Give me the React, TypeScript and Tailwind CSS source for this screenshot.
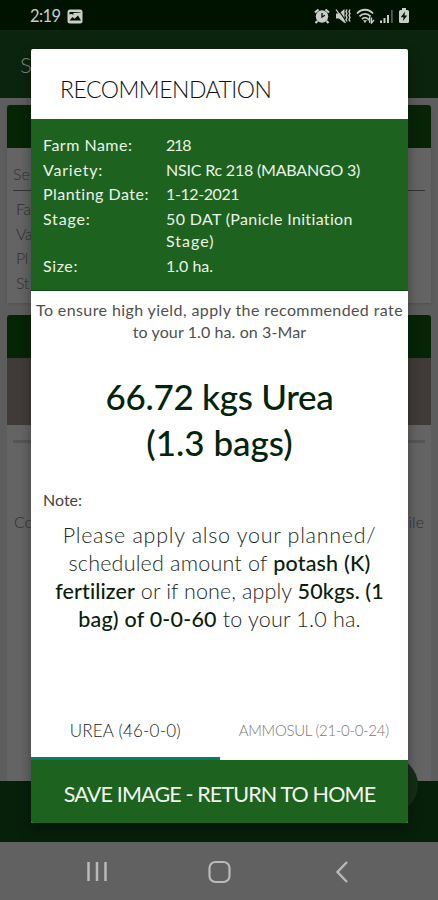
import { clsx } from "clsx"

const details = [
  { label: "Farm Name:", lines: ["218"], labelClass: "tracking-[0.5px]", valueClass: "tracking-[-1.2px]" },
  { label: "Variety:", lines: ["NSIC Rc 218 (MABANGO 3)"], labelClass: "tracking-[0.8px]", valueClass: "tracking-[-0.2px]" },
  { label: "Planting Date:", lines: ["1-12-2021"], labelClass: "tracking-[0.5px]", valueClass: "tracking-[-0.4px]" },
  { label: "Stage:", lines: ["50 DAT (Panicle Initiation", "Stage)"], labelClass: "tracking-[0.8px]", valueClass: "tracking-[0.35px]" },
  { label: "Size:", lines: ["1.0 ha."], labelClass: "tracking-[0.6px]", valueClass: "tracking-[0px]" },
]

function StatusBar() {
  return (
    <div className="flex h-[30px] items-center bg-[#001300] pt-[2px] pr-[29px] pl-[30px] text-[#c9cdc9]">
      <span className="w-[31px] text-[16.500px] leading-none tracking-[-0.6px] whitespace-nowrap">2:19</span>
      <svg className="ml-[6px]" width="16" height="15" viewBox="0 0 16 15">
        <rect x="0.5" y="0.5" width="15" height="14" rx="2.5" fill="currentColor" />
        <path d="M2.500 5.500c2-1.500 3 .5 4.500 0l-1-1.500 7.500-.5V3h-11z" fill="#001300" />
        <path d="M2.500 11.500 5.500 8l2 1.700L11 6.500l3 5z" fill="#001300" />
      </svg>
      <div className="ml-auto flex items-center gap-[5px]">
        <svg width="16" height="16" viewBox="0 0 16 16" fill="none" stroke="currentColor">
          <circle cx="8" cy="8.500" r="6.200" fill="currentColor" stroke="none" />
          <path d="M1 4.500 4.500 1.500M15 4.500 11.500 1.500M3.500 13 1.500 15M12.500 13 14.500 15" strokeWidth="2.200" />
          <path d="M8 5v4l2.800-1.800" stroke="#001300" strokeWidth="1.300" />
        </svg>
        <svg width="16" height="16" viewBox="0 0 16 16" fill="none" stroke="currentColor">
          <path d="M1 5.500h3L9.500 1v14L4 10.500H1z" fill="currentColor" stroke="none" />
          <path d="M3 1.500 11 13" stroke="#001300" strokeWidth="1.200" />
          <path d="M1 1.500 10.500 15" strokeWidth="1.300" />
          <path d="M12 1.500l-1 2 1 2-1 2 1 2-1 2 1 2M15 1.500l-1 2 1 2-1 2 1 2-1 2 1 2" strokeWidth="1.400" />
        </svg>
        <svg width="19" height="16" viewBox="0 0 19 16" fill="none" stroke="currentColor" strokeWidth="1.800">
          <path d="M1 5.500c4.500-5 11.500-5 16 0M3.500 8.300c3.200-3.300 7.800-3.300 11 0M6 11c1.800-1.700 4.200-1.700 6 0" />
          <path d="M7 12.200 9 15l2-2.800z" fill="currentColor" stroke="none" />
          <path d="M12 12.500 13.700 9.500v5.500M15.500 9.500v5.500l2.500-3" strokeWidth="1.300" />
        </svg>
        <svg width="14" height="16" viewBox="0 0 14 16" fill="currentColor">
          <path d="M0 12.500h2V15H0zM3.500 10h2v5h-2zM7 7h2v8H7z" />
          <path d="M11 2h1.800v13H11z" opacity="0.4" />
        </svg>
        <svg width="10" height="16" viewBox="0 0 10 16">
          <path d="M3 0h4v2h1.500A1.500 1.500 0 0 1 10 3.500v10A1.500 1.500 0 0 1 8.500 15h-7A1.500 1.500 0 0 1 0 13.500v-10A1.500 1.500 0 0 1 1.500 2H3z" fill="currentColor" />
          <path d="M6 3.500 1.800 9.300h2.700L4 13l4.200-5.500H5.500z" fill="#001300" />
        </svg>
      </div>
    </div>
  )
}

function PageBehind() {
  return (
    <div className="flex h-[751px] flex-col bg-[#5d5d5d] pt-[7px]">
      <div className="mx-[7px] h-[198px] rounded-t-[3px] bg-[#646464] font-light text-[#303030] shadow-sm">
        <div className="h-[43px] rounded-t-[3px] bg-[#052506]" />
        <div className="mx-[6px] h-[43px] border-b border-[#333] pt-[16px] text-[16px] leading-[20px]">Se</div>
        <div className="pt-[6px] pl-[9px] text-[16px] leading-[24.700px] tracking-[-0.5px]">
          <p>Fa</p>
          <p>Va</p>
          <p>Pl</p>
          <p>St</p>
        </div>
      </div>
      <div className="mx-[7px] mt-[12px] grow rounded-t-[3px] bg-[#646464]">
        <div className="h-[43px] rounded-t-[3px] bg-[#052506]" />
        <div className="h-[67px] bg-[#403b38]" />
        <div className="mx-[6px] mt-[15px] h-[3px] bg-[#555]" />
        <div className="mt-[69px] flex justify-between pr-[7px] pl-[7px] text-[16px] leading-[20px] font-light text-[#303030]">
          <span>Co</span>
          <span>ile</span>
        </div>
      </div>
    </div>
  )
}

function NavBar() {
  return (
    <div className="flex h-[58px] items-center bg-[#616161] text-[#b9b9b9]">
      <svg width="438" height="58" viewBox="0 0 438 58" fill="none" stroke="currentColor">
        <path d="M88.500 20v19M97 20v19M105.500 20v19" strokeWidth="2.500" />
        <rect x="209.500" y="20" width="20" height="20" rx="6" strokeWidth="2.200" />
        <path d="M347 20 337.500 30l9.500 10" strokeWidth="2.400" />
      </svg>
    </div>
  )
}

function Dialog() {
  return (
    <div className="absolute top-[49px] left-[31px] flex h-[774px] w-[377px] flex-col overflow-hidden rounded-[2px] bg-white">
      <h2 className="h-[70px] pt-[25px] pl-[29px] text-[23px] leading-[30px] font-light tracking-[-0.5px] whitespace-nowrap text-[#111]">
        RECOMMENDATION
      </h2>

      <div className="flex h-[172px] flex-col gap-[2.700px] border-b border-[#0d470f] bg-[#1e621f] pt-[15px] pl-[12px] text-[16px] leading-[22px] text-[#e9f3e6]">
        {details.map((row) => (
          <div key={row.label} className="flex whitespace-nowrap">
            <span className={clsx("w-[123px]", row.labelClass)}>{row.label}</span>
            <div className={row.valueClass}>
              {row.lines.map((line) => (
                <p key={line} className="last:not-first:tracking-[1px]">
                  {line}
                </p>
              ))}
            </div>
          </div>
        ))}
      </div>

      <div className="pt-[8px] text-center text-[16px] leading-[22px] whitespace-nowrap text-[#505050]">
        <p className="tracking-[0.4px]">To ensure high yield, apply the recommended rate</p>
        <p className="tracking-[0.1px]">to your 1.0 ha. on 3-Mar</p>
      </div>

      <div className="mt-[30px] text-center text-[35px] leading-[46px] font-medium whitespace-nowrap text-[#032408]">
        <p className="tracking-[-0.3px]">66.72 kgs Urea</p>
        <p className="tracking-[0px]">(1.3 bags)</p>
      </div>

      <p className="mt-[24px] pl-[12px] text-[16px] leading-[22px] text-[#444]">Note:</p>

      <div className="mt-[10px] text-center text-[21.500px] leading-[28px] font-light whitespace-nowrap text-[#1c2a1c]">
        <p className="tracking-[0.7px]">Please apply also your planned/</p>
        <p className="tracking-[0.2px]">
          scheduled amount of <b className="font-medium text-[#0a1e0a]">potash (K)</b>
        </p>
        <p className="tracking-[0.1px]">
          <b className="font-medium text-[#0a1e0a]">fertilizer</b> or if none, apply{" "}
          <b className="font-medium text-[#0a1e0a]">50kgs. (1</b>
        </p>
        <p className="tracking-[0.2px]">
          <b className="font-medium text-[#0a1e0a]">bag) of 0-0-60</b> to your 1.0 ha.
        </p>
      </div>

      <div className="mt-auto grid h-[60px] grid-cols-2 text-center whitespace-nowrap">
        <div className="border-b-[3px] border-[#087c67] pt-[19px] text-[17px] leading-[24px] font-light tracking-[0.2px] text-[#222]">
          UREA (46-0-0)
        </div>
        <div className="pt-[18px] text-[15px] leading-[24px] font-light tracking-[-0.300px] text-[#777]">
          AMMOSUL (21-0-0-24)
        </div>
      </div>

      <button className="h-[63px] shrink-0 bg-[#1e621f] pt-[5px] text-[21.500px] tracking-[-0.850px] whitespace-nowrap text-[#f2f7ef]">
        SAVE IMAGE - RETURN TO HOME
      </button>
    </div>
  )
}

export default function App() {
  return (
    <div className="relative h-[900px] w-[438px] overflow-hidden bg-[#5d5d5d] font-['Lato',sans-serif]">
      <StatusBar />
      <div className="h-[68px] bg-[#0b240d] pt-[19px] pl-[20px] text-[22px] leading-[32px] font-light text-[#7d867d]">S</div>
      <div className="h-[683px] overflow-hidden">
        <PageBehind />
      </div>
      <div className="h-[61px] bg-[#06200a]" />
      <NavBar />
      <div className="absolute top-[757px] left-[362px] size-[56px] rounded-full bg-[#123013]" />
      <div className="absolute top-[49px] left-[31px] h-[774px] w-[377px] shadow-[0_6px_12px_rgba(0,0,0,0.35)]" />
      <Dialog />
    </div>
  )
}
